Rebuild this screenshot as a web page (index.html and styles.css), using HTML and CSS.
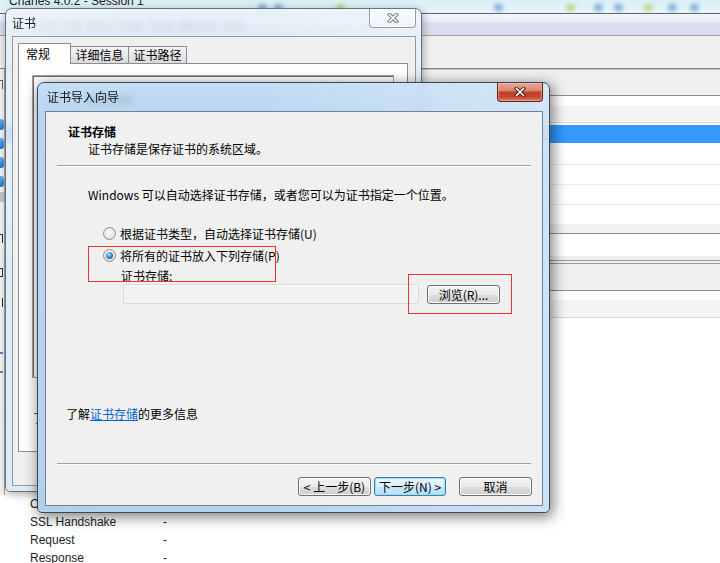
FILE: index.html
```html
<!DOCTYPE html>
<html lang="zh-CN">
<head>
    <meta charset="UTF-8">
    <meta name="viewport" content="width=device-width, initial-scale=1.0">
    <title>证书导入向导</title>
    <link rel="stylesheet" href="styles.css">
</head>
<body>
<div class="desktop">

    <!-- Charles main window, behind the dialogs -->
    <div class="charles">
        <div class="ch-title">
            <span class="ch-caption">Charles 4.0.2 - Session 1</span>
            <span class="blob blue" style="left: 258px"></span>
            <span class="blob blue" style="left: 274px"></span>
            <span class="blob green" style="left: 336px"></span>
            <span class="blob blue" style="left: 494px"></span>
            <span class="blob green" style="left: 566px"></span>
            <span class="blob blue" style="left: 594px"></span>
            <span class="blob blue" style="left: 614px"></span>
            <span class="blob green" style="left: 644px"></span>
            <span class="blob blue" style="left: 668px"></span>
            <span class="blob blue" style="left: 690px"></span>
        </div>
        <div class="ch-menu">
            <span>File</span><span>Edit</span><span>View</span><span>Proxy</span><span>Tools</span><span>Window</span><span>Help</span>
        </div>
        <div class="ch-toolbar"></div>
        <div class="ch-main">
            <div class="ch-upper">
                <div class="ch-side">
                    <span class="sd-glyph sd-s"></span>
                    <span class="sd-icon sd-first"></span>
                    <span class="sd-icon"></span>
                    <span class="sd-icon"></span>
                    <span class="sd-icon"></span>
                    <span class="sd-grey"></span>
                    <span class="sd-glyph sd-f"></span>
                    <span class="sd-glyph sd-c"></span>
                    <span class="sd-glyph sd-n"></span>
                    <span class="sd-dash sd-d1"></span>
                    <span class="sd-dash sd-d2"></span>
                </div>
                <div class="ch-pane">
                    <div class="band b-top"></div>
                    <div class="band b-w10"></div>
                    <div class="band b-head"></div>
                    <div class="band b-w2"></div>
                    <div class="band b-sel"></div>
                    <div class="band b-row b-row1"></div>
                    <div class="band b-row"></div>
                    <div class="band b-row"></div>
                    <div class="band b-row"></div>
                    <div class="band b-g9"></div>
                    <div class="band b-w22"></div>
                    <div class="band b-g5"></div>
                    <div class="band b-g3"></div>
                    <div class="band b-tools"></div>
                    <div class="band b-w9"></div>
                    <div class="band b-head2"></div>
                </div>
            </div>
            <div class="ch-rows">
                <div class="ch-row"><span class="ch-key">Cipher Suite</span><span>-</span></div>
                <div class="ch-row"><span class="ch-key">SSL Handshake</span><span>-</span></div>
                <div class="ch-row"><span class="ch-key">Request</span><span>-</span></div>
                <div class="ch-row"><span class="ch-key">Response</span><span>-</span></div>
            </div>
        </div>
    </div>

    <!-- 证书 dialog (inactive) -->
    <div class="win cert">
        <div class="win-titlebar">
            <span class="win-caption">证书</span>
            <span class="win-close">
                <svg width="12" height="10" viewBox="0 0 12 10"><path d="M2.5 1.5 L9.5 8.5 M9.5 1.5 L2.5 8.5" stroke="#6d747c" stroke-width="3.6" stroke-linecap="square"/><path d="M2.5 1.5 L9.5 8.5 M9.5 1.5 L2.5 8.5" stroke="#fff" stroke-width="1.7" stroke-linecap="square"/></svg>
            </span>
        </div>
        <div class="win-client cert-client">
            <div class="tabs">
                <span class="tab active">常规</span>
                <span class="tab">详细信息</span>
                <span class="tab">证书路径</span>
            </div>
            <div class="tab-panel">
                <div class="cert-info">
                    <div class="cert-info-head">
                        <svg class="cert-icon" width="14" height="14" viewBox="0 0 14 14">
                            <rect x="0.5" y="1.5" width="13" height="10" fill="#fbfbf4" stroke="#8a8a7a"/>
                            <path d="M3 4h7M3 6h5" stroke="#9a9a9a"/>
                            <circle cx="10" cy="9" r="2.6" fill="#e2b23a" stroke="#a57a12"/>
                            <path d="M9 11l-1 3 2-1 2 1-1-3" fill="#c8402f"/>
                        </svg>
                        <span class="cert-info-title"></span>
                    </div>
                </div>
                <p class="cert-more">了解</p>
            </div>
        </div>
    </div>

    <!-- 证书导入向导 (active) -->
    <div class="win wizard">
        <div class="win-titlebar">
            <span class="win-caption">证书导入向导</span>
            <span class="win-close red">
                <svg width="12" height="10" viewBox="0 0 12 10"><path d="M2.5 1.5 L9.5 8.5 M9.5 1.5 L2.5 8.5" stroke="#4a1810" stroke-width="3.6" stroke-linecap="square"/><path d="M2.5 1.5 L9.5 8.5 M9.5 1.5 L2.5 8.5" stroke="#fff" stroke-width="1.7" stroke-linecap="square"/></svg>
            </span>
        </div>
        <div class="win-client wz-client">
            <div class="wz-header">
                <div class="wz-h-title">证书存储</div>
                <div class="wz-h-sub">证书存储是保存证书的系统区域。</div>
            </div>
            <div class="etched"></div>

            <div class="wz-body">
                <p class="wz-intro">Windows 可以自动选择证书存储，或者您可以为证书指定一个位置。</p>
                <div class="radio-row radio-first"><span class="radio"></span>根据证书类型，自动选择证书存储(U)</div>
                <div class="radio-row"><span class="radio on"></span>将所有的证书放入下列存储(P)</div>
                <div class="store-label">证书存储:</div>
                <div class="store-row">
                    <span class="textbox"></span>
                    <button class="btn browse">浏览(R)...</button>
                </div>
            </div>

            <p class="wz-more">了解<a href="#">证书存储</a>的更多信息</p>
            <div class="etched etched-bottom"></div>

            <div class="wz-buttons">
                <button class="btn">&lt; 上一步(B)</button>
                <button class="btn default">下一步(N) &gt;</button>
                <button class="btn cancel">取消</button>
            </div>
        </div>
    </div>

    <!-- red annotation boxes drawn over the screenshot -->
    <div class="mark mark-2"></div>
    <div class="mark mark-1"></div>

</div>
</body>
</html>
```

FILE: styles.css
```css
* {
    box-sizing: border-box;
}

html, body {
    margin: 0;
    padding: 0;
}

body {
    width: 720px;
    height: 563px;
    overflow: hidden;
    background: #fff;
    color: #000;
    font-family: "Noto Sans CJK SC", "Liberation Sans", sans-serif;
    font-size: 12px;
}

p {
    margin: 0;
}

.desktop {
    position: relative;
    width: 720px;
    height: 563px;
    overflow: hidden;
}

/* ---------- Charles background ---------- */

.charles {
    display: flex;
    flex-direction: column;
    height: 100%;
}

.ch-title {
    position: relative;
    flex: none;
    height: 13px;
    padding-left: 9px;
    overflow: hidden;
    background: linear-gradient(#d9eff6, #e7f6fa);
}

.ch-caption {
    display: block;
    margin-top: -6px;
    font: 12px/14px "Liberation Sans", sans-serif;
    color: #1b1b1b;
}

.blob {
    position: absolute;
    top: 4px;
    width: 9px;
    height: 7px;
    border-radius: 50%;
    filter: blur(2px);
}

.blob.blue {
    background: #7fa9d6;
}

.blob.green {
    background: #b9d77e;
}

.ch-menu {
    flex: none;
    display: flex;
    align-items: center;
    gap: 5px;
    height: 23px;
    padding-left: 40px;
    border-top: 1px solid #5b636c;
    border-bottom: 1px solid #a3a3a3;
    background: linear-gradient(#f4f5fb 0, #eceef8 35%, #dcdff1 40%, #dadded 100%);
    font: 11px "Liberation Sans", sans-serif;
    color: #333;
}

.ch-toolbar {
    flex: none;
    height: 33px;
    background: #f0f0f0;
    border-bottom: 1px solid #858585;
}

.ch-main {
    flex: 1;
    display: flex;
    flex-direction: column;
}

.ch-upper {
    flex: none;
    display: flex;
    height: 426px;
}

.ch-side {
    width: 5px;
    display: flex;
    flex-direction: column;
    align-items: flex-start;
    overflow: hidden;
    background: #f6f6f6;
    border-right: 1px solid #a9a9a9;
}

.sd-glyph {
    width: 3px;
    height: 9px;
    border-right: 1px solid #333;
    border-top: 1px solid #333;
}

.sd-s { margin-top: 11px; border-color: #666; }
.sd-f { margin-top: 32px; }
.sd-c { margin-top: 25px; border-bottom: 1px solid #333; }
.sd-n { margin-top: 21px; border-top: 0; }

.sd-icon {
    width: 4px;
    height: 11px;
    margin-top: 8px;
    border-radius: 0 3px 3px 0;
    background: linear-gradient(#6cb4f0, #1f78d1);
}

.sd-icon.sd-first {
    margin-top: 30px;
}

.sd-grey {
    width: 4px;
    height: 10px;
    margin-top: 5px;
    background: #c8c8c8;
}

.sd-dash {
    width: 3px;
    height: 2px;
    background: #5a7fc8;
}

.sd-d1 { margin-top: 45px; }
.sd-d2 { margin-top: 17px; }

.ch-pane {
    flex: 1;
    background: #fff;
}

.b-top { height: 27px; background: #f0f0f0; border-top: 1px solid #c4c4c4; border-bottom: 1px solid #8c8c8c; }
.b-w10 { height: 10px; }
.b-head { height: 17px; background: #f4f4f6; border-bottom: 1px solid #dcdcdc; }
.b-w2 { height: 2px; }
.b-sel { height: 18px; background: #3399ff; }
.b-row { height: 20px; border-bottom: 1px solid #ececec; }
.b-row1 { height: 22px; }
.b-g9 { height: 9px; background: #f2f2f2; border-bottom: 1px solid #8c8c8c; }
.b-w22 { height: 22px; }
.b-g5 { height: 5px; background: #efefef; border-bottom: 1px solid #9a9a9a; }
.b-g3 { height: 3px; background: #f0f0f0; border-bottom: 1px solid #9a9a9a; }
.b-tools { height: 27px; background: #f0f0f0; border-bottom: 1px solid #8a8a8a; }
.b-w9 { height: 9px; }
.b-head2 { height: 18px; background: #f5f5f7; border-bottom: 1px solid #d8d8d8; }

.ch-rows {
    padding-left: 30px;
    font: 12px/18px "Liberation Sans", sans-serif;
    color: #1e1e1e;
}

.ch-row {
    display: flex;
    height: 18px;
}

.ch-key {
    width: 133px;
}

/* ---------- Windows 7 style dialogs ---------- */

.win {
    position: absolute;
    display: flex;
    flex-direction: column;
    border: 1px solid #56626e;
    border-radius: 7px 7px 5px 5px;
    backdrop-filter: blur(3px);
}

.win-titlebar {
    display: flex;
    align-items: flex-start;
}

.win-close {
    display: flex;
    align-items: center;
    justify-content: center;
    margin-left: auto;
    border: 1px solid;
    border-top: 0;
    border-radius: 0 0 4px 4px;
}

.win-client {
    border: 1px solid #8797a8;
    background: #f0f0f0;
}

/* 证书 */

.cert {
    left: 5px;
    top: 8px;
    width: 417px;
    height: 484px;
    padding: 0 5px 5px 6px;
    border-color: #68727c;
    background:
        linear-gradient(90deg, rgba(255, 255, 255, 0.25), rgba(255, 255, 255, 0) 40%, rgba(255, 255, 255, 0.3)),
        linear-gradient(rgba(236, 245, 251, 0.78), rgba(214, 232, 245, 0.8) 40px, rgba(200, 224, 242, 0.85));
    box-shadow: 1px 2px 8px rgba(0, 0, 0, 0.35);
}

.cert .win-titlebar {
    height: 27px;
}

.cert .win-caption {
    line-height: 27px;
    color: #222;
}

.cert .win-close {
    width: 47px;
    height: 19px;
    border-color: rgba(70, 80, 92, 0.55);
    background: linear-gradient(rgba(255, 255, 255, 0.55), rgba(255, 255, 255, 0.2));
    box-shadow: inset 0 0 0 1px rgba(255, 255, 255, 0.6);
}

.cert-client {
    height: 450px;
    padding: 6px 0 0 5px;
    border-color: #8e9aa6;
}

.tabs {
    position: relative;
    z-index: 1;
    display: flex;
    align-items: flex-end;
    margin-bottom: -1px;
}

.tab {
    width: 58px;
    height: 17px;
    margin-bottom: 1px;
    border: 1px solid #898c95;
    border-left: 0;
    border-bottom: 0;
    background: linear-gradient(#f5f5f5, #e8e8e8 50%, #dadada);
    text-align: center;
    line-height: 16px;
}

.tab.active {
    width: 53px;
    height: 21px;
    margin-bottom: 0;
    padding-left: 7px;
    border-left: 1px solid #898c95;
    background: #fff;
    text-align: left;
    line-height: 19px;
}

.tab-panel {
    width: 390px;
    height: 389px;
    padding: 11px 0 0 13px;
    border: 1px solid #898c95;
    background: #fff;
}

.cert-info {
    width: 362px;
    height: 303px;
    border: 1px solid #a0a0a0;
    box-shadow: inset 1px 1px 0 #6e6e6e;
    background: #fff;
}

.cert-info-head {
    display: flex;
    align-items: center;
    gap: 15px;
    margin: 17px 0 0 24px;
}

.cert-info-title {
    width: 48px;
    height: 10px;
    background: #3a3a3a;
}

.cert-more {
    margin: 32px 0 0 1px;
    line-height: 16px;
}

/* 证书导入向导 */

.wizard {
    left: 37px;
    top: 82px;
    width: 513px;
    height: 431px;
    padding: 0 6px 6px 7px;
    border-color: #3c4854;
    background:
        linear-gradient(90deg, rgba(255, 255, 255, 0) 45%, rgba(255, 255, 255, 0.35)),
        linear-gradient(rgba(190, 218, 243, 0.92), rgba(180, 211, 240, 0.92) 30px, rgba(176, 208, 239, 0.94));
    box-shadow: 2px 3px 14px 1px rgba(0, 0, 0, 0.5);
}

.wizard .win-titlebar {
    height: 28px;
}

.wizard .win-caption {
    padding-left: 2px;
    line-height: 28px;
    color: #111;
}

.wizard .win-close {
    width: 46px;
    height: 19px;
    border-color: #5a2318;
    background: linear-gradient(#e8a898 0, #d88571 42%, #c4422b 50%, #c64530 78%, #e0866c 100%);
    box-shadow: inset 0 0 0 1px rgba(255, 200, 190, 0.45);
}

.wz-client {
    height: 395px;
    border-color: #6f8296;
}

.wz-header {
    padding: 11px 0 0 22px;
    line-height: 17px;
}

.wz-h-title {
    font-weight: bold;
}

.wz-h-sub {
    padding-left: 20px;
}

.etched {
    height: 2px;
    margin: 8px 11px 0;
    border-top: 1px solid #a0a0a0;
    border-bottom: 1px solid #fff;
}

.wz-body {
    padding-left: 42px;
}

.wz-intro {
    margin-top: 20px;
    line-height: 16px;
}

.radio-row {
    display: flex;
    align-items: center;
    height: 22px;
    margin-left: 15px;
}

.radio-first {
    margin-top: 19px;
}

.radio {
    position: relative;
    flex: none;
    width: 13px;
    height: 13px;
    margin-right: 4px;
    border: 1px solid #8e8f8f;
    border-radius: 50%;
    background: radial-gradient(circle at 50% 40%, #fdfdfd, #e4e4e4 65%, #cfcfcf);
}

.radio.on::after {
    content: "";
    position: absolute;
    left: 2px;
    top: 2px;
    width: 7px;
    height: 7px;
    border-radius: 50%;
    background: radial-gradient(circle at 40% 35%, #aee0ff, #2b7fce 55%, #0b3d78);
}

.store-label {
    margin: 2px 0 0 33px;
    line-height: 16px;
}

.store-row {
    display: flex;
    gap: 8px;
    height: 20px;
    margin-left: 35px;
}

.textbox {
    width: 296px;
    height: 20px;
    border: 1px solid #d9d9d9;
    border-radius: 2px;
    background: #f2f2f2;
    box-shadow: inset 0 0 0 1px #f8f8f8;
}

.btn {
    height: 19px;
    padding: 0;
    border: 1px solid #707070;
    border-radius: 3px;
    background: linear-gradient(#f2f2f2 0, #ebebeb 50%, #dddddd 50%, #cfcfcf 100%);
    box-shadow: inset 0 0 0 1px #fbfbfb;
    font: 12px/17px "Noto Sans CJK SC", sans-serif;
    color: #000;
    white-space: nowrap;
}

.browse {
    width: 73px;
    margin-top: 1px;
}

.wz-more {
    margin: 101px 0 0 20px;
    line-height: 17px;
}

.wz-more a {
    color: #0066cc;
    text-decoration: underline;
}

.etched-bottom {
    margin-top: 41px;
}

.wz-buttons {
    display: flex;
    justify-content: flex-end;
    gap: 3px;
    margin: 12px 10px 0 0;
}

.wz-buttons .btn {
    width: 73px;
}

.wz-buttons .btn.default {
    width: 72px;
    border-color: #3c7fb1;
    background: linear-gradient(#eaf6fd 0, #dcf0fc 50%, #c8e8fb 50%, #b9e0f7 100%);
    box-shadow: inset 0 0 0 1px #9fdcfa;
}

.wz-buttons .btn.cancel {
    margin-left: 10px;
}

/* annotation boxes */

.mark {
    position: absolute;
    z-index: 5;
    border: 1px solid rgb(240, 50, 52);
    background: transparent;
}

.mark-1 {
    left: 88px;
    top: 246px;
    width: 188px;
    height: 36px;
}

.mark-2 {
    left: 408px;
    top: 274px;
    width: 104px;
    height: 40px;
}
```
